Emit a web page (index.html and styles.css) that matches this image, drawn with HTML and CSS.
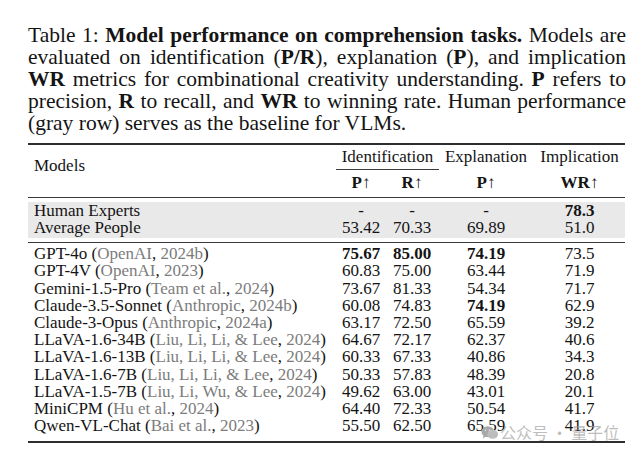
FILE: index.html
```html
<!DOCTYPE html>
<html>
<head>
<meta charset="utf-8">
<link rel="stylesheet" href="styles.css">
</head>
<body>
<div class="page">
  <div class="caption">
    <div class="cl">Table 1: <b>Model performance on comprehension tasks.</b> Models are</div>
    <div class="cl">evaluated on identification (<b>P/R</b>), explanation (<b>P</b>), and implication</div>
    <div class="cl"><b>WR</b> metrics for combinational creativity understanding. <b>P</b> refers to</div>
    <div class="cl">precision, <b>R</b> to recall, and <b>WR</b> to winning rate. Human performance</div>
    <div class="cl last">(gray row) serves as the baseline for VLMs.</div>
  </div>

  <div class="table">
    <div class="head">
      <div class="models-h">Models</div>
      <div class="ident">Identification</div>
      <div class="h1 c4">Explanation</div>
      <div class="h1 c5">Implication</div>
      <div class="h2 c2"><b>P</b><span class="arr">↑</span></div>
      <div class="h2 c3"><b>R</b><span class="arr">↑</span></div>
      <div class="h2 c4"><b>P</b><span class="arr">↑</span></div>
      <div class="h2 c5"><b>WR</b><span class="arr">↑</span></div>
    </div>

    <div class="human">
      <div class="gray">
        <div class="row"><div class="name">Human Experts</div><div>-</div><div>-</div><div>-</div><div><b>78.3</b></div></div>
        <div class="row"><div class="name">Average People</div><div>53.42</div><div>70.33</div><div>69.89</div><div>51.0</div></div>
      </div>
    </div>

    <div class="body">
      <div class="row"><div class="name">GPT-4o <span class="cite">(<span class="g">OpenAI</span>, <span class="g">2024b</span>)</span></div><div><b>75.67</b></div><div><b>85.00</b></div><div><b>74.19</b></div><div>73.5</div></div>
      <div class="row"><div class="name">GPT-4V <span class="cite">(<span class="g">OpenAI</span>, <span class="g">2023</span>)</span></div><div>60.83</div><div>75.00</div><div>63.44</div><div>71.9</div></div>
      <div class="row"><div class="name">Gemini-1.5-Pro <span class="cite">(<span class="g">Team et al.</span>, <span class="g">2024</span>)</span></div><div>73.67</div><div>81.33</div><div>54.34</div><div>71.7</div></div>
      <div class="row"><div class="name">Claude-3.5-Sonnet <span class="cite">(<span class="g">Anthropic</span>, <span class="g">2024b</span>)</span></div><div>60.08</div><div>74.83</div><div><b>74.19</b></div><div>62.9</div></div>
      <div class="row"><div class="name">Claude-3-Opus <span class="cite">(<span class="g">Anthropic</span>, <span class="g">2024a</span>)</span></div><div>63.17</div><div>72.50</div><div>65.59</div><div>39.2</div></div>
      <div class="row"><div class="name">LLaVA-1.6-34B <span class="cite">(<span class="g">Liu, Li, Li, &amp; Lee</span>, <span class="g">2024</span>)</span></div><div>64.67</div><div>72.17</div><div>62.37</div><div>40.6</div></div>
      <div class="row"><div class="name">LLaVA-1.6-13B <span class="cite">(<span class="g">Liu, Li, Li, &amp; Lee</span>, <span class="g">2024</span>)</span></div><div>60.33</div><div>67.33</div><div>40.86</div><div>34.3</div></div>
      <div class="row"><div class="name">LLaVA-1.6-7B <span class="cite">(<span class="g">Liu, Li, Li, &amp; Lee</span>, <span class="g">2024</span>)</span></div><div>50.33</div><div>57.83</div><div>48.39</div><div>20.8</div></div>
      <div class="row"><div class="name">LLaVA-1.5-7B <span class="cite">(<span class="g">Liu, Li, Wu, &amp; Lee</span>, <span class="g">2024</span>)</span></div><div>49.62</div><div>63.00</div><div>43.01</div><div>20.1</div></div>
      <div class="row"><div class="name">MiniCPM <span class="cite">(<span class="g">Hu et al.</span>, <span class="g">2024</span>)</span></div><div>64.40</div><div>72.33</div><div>50.54</div><div>41.7</div></div>
      <div class="row"><div class="name">Qwen-VL-Chat <span class="cite">(<span class="g">Bai et al.</span>, <span class="g">2023</span>)</span></div><div>55.50</div><div>62.50</div><div>65.59</div><div>41.9</div></div>
    </div>
  </div>

  <div class="watermark">
    <svg class="wm-icon" width="18" height="15" viewBox="0 0 20 16">
      <ellipse cx="7.5" cy="7" rx="7" ry="6" fill="#a8a8a8"/>
      <ellipse cx="13" cy="10" rx="6" ry="5" fill="#bdbdbd"/>
      <path d="M3 11 L2 15 L6 12 Z" fill="#a8a8a8"/>
      <circle cx="5" cy="5.5" r="0.9" fill="#e6e6e6"/>
      <circle cx="9.5" cy="5.5" r="0.9" fill="#e6e6e6"/>
    </svg>
    <span class="wm-text">公众号 · 量子位</span>
  </div>
</div>
</body>
</html>
```

FILE: styles.css
```css
html, body {
  margin: 0;
  padding: 0;
  background: #ffffff;
}

.page {
  position: relative;
  width: 640px;
  height: 457px;
  overflow: hidden;
  font-family: "Liberation Serif", "Times New Roman", serif;
  color: #141414;
}

.caption {
  padding: 23.5px 14px 0 28px;
  font-size: 21.5px;
  line-height: 22.2px;
  word-spacing: -1px;
}

.cl {
  text-align: justify;
  text-align-last: justify;
  white-space: nowrap;
}

.cl.last {
  text-align-last: left;
  word-spacing: 0;
}

.caption b {
  font-weight: bold;
}

.table {
  margin: 8.5px 15px 0 28px;
  font-size: 17px;
  line-height: 17.2px;
}

.head,
.row {
  display: grid;
  grid-template-columns: 308px 50px 52px 96px 91px;
}

.head {
  border-top: 2px solid #2e2e2e;
  border-bottom: 1px solid #3a3a3a;
  grid-template-rows: 25px 27px;
}

.models-h {
  grid-column: 1;
  grid-row: 1 / 3;
  padding-left: 6px;
  align-self: center;
  margin-top: -10px;
}

.ident {
  grid-column: 2 / 4;
  grid-row: 1;
  text-align: center;
  padding-top: 3px;
  border-bottom: 1px solid #3a3a3a;
  margin-right: -1px;
}

.h1 {
  grid-row: 1;
  text-align: center;
  padding-top: 3px;
}

.h2 {
  grid-row: 2;
  text-align: center;
  padding-top: 4px;
}

.c2 { grid-column: 2; }
.c3 { grid-column: 3; }
.c4 { grid-column: 4; }
.c5 { grid-column: 5; }

.arr {
  font-weight: normal;
}

.human {
  padding: 4px 0 4px;
}

.gray {
  background: #e9e9e9;
  padding: 0 0 1.5px;
}

.row > div {
  text-align: center;
  white-space: nowrap;
}

.row > .name {
  text-align: left;
  padding-left: 6px;
}

.body {
  border-top: 1px solid #3a3a3a;
  border-bottom: 2px solid #2e2e2e;
  padding: 2.2px 0 6.6px;
}

.cite {
  color: #141414;
}

.g {
  color: #7c7c7c;
}

.watermark {
  position: absolute;
  left: 481px;
  top: 421px;
  display: flex;
  align-items: center;
  gap: 1px;
}

.wm-icon {
  display: block;
}

.wm-text {
  font-family: "Noto Sans CJK SC", "Noto Sans", sans-serif;
  font-size: 16px;
  line-height: 22px;
  color: rgba(160, 160, 160, 0.7);
}
```
